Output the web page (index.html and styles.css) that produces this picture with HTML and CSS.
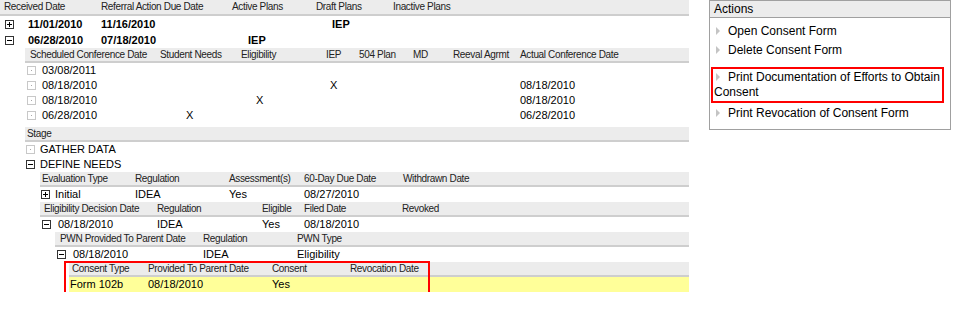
FILE: index.html
```html
<!DOCTYPE html>
<html lang="en">
<head>
  <meta charset="UTF-8">
  <title>Referral Plans</title>
  <link rel="stylesheet" href="styles.css">
</head>
<body>
<div class="page">
  <!-- Referral records -->
  <div class="records">
    <div class="row top head">
      <div>Received Date</div>
      <div>Referral Action Due Date</div>
      <div>Active Plans</div>
      <div>Draft Plans</div>
      <div>Inactive Plans</div>
    </div>
    <div class="row top data">
      <div><span class="tog plus"></span>11/01/2010</div>
      <div>11/16/2010</div>
      <div></div>
      <div class="plan">IEP</div>
      <div></div>
    </div>
    <div class="row top data">
      <div><span class="tog"></span>06/28/2010</div>
      <div>07/18/2010</div>
      <div class="plan">IEP</div>
      <div></div>
      <div></div>
    </div>

    <!-- Conferences -->
    <div class="conf">
      <div class="row head">
        <div>Scheduled Conference Date</div>
        <div>Student Needs</div>
        <div>Eligibility</div>
        <div>IEP</div>
        <div>504 Plan</div>
        <div>MD</div>
        <div>Reeval Agrmt</div>
        <div>Actual Conference Date</div>
      </div>
      <div class="row data">
        <div><span class="leaf"></span>03/08/2011</div>
        <div></div><div></div><div></div><div></div><div></div><div></div><div></div>
      </div>
      <div class="row data">
        <div><span class="leaf"></span>08/18/2010</div>
        <div></div><div></div><div>X</div><div></div><div></div><div></div><div>08/18/2010</div>
      </div>
      <div class="row data">
        <div><span class="leaf"></span>08/18/2010</div>
        <div></div><div>X</div><div></div><div></div><div></div><div></div><div>08/18/2010</div>
      </div>
      <div class="row data">
        <div><span class="leaf"></span>06/28/2010</div>
        <div>X</div><div></div><div></div><div></div><div></div><div></div><div>06/28/2010</div>
      </div>
    </div>

    <!-- Stages -->
    <div class="stage">
      <div class="row head"><div>Stage</div></div>
      <div class="row data"><div><span class="leaf"></span>GATHER DATA</div></div>
      <div class="row data"><div><span class="tog"></span>DEFINE NEEDS</div></div>
    </div>

    <div class="eval">
      <div class="row head">
        <div>Evaluation Type</div>
        <div>Regulation</div>
        <div>Assessment(s)</div>
        <div>60-Day Due Date</div>
        <div>Withdrawn Date</div>
      </div>
      <div class="row data">
        <div><span class="tog plus"></span>Initial</div>
        <div>IDEA</div>
        <div>Yes</div>
        <div>08/27/2010</div>
        <div></div>
      </div>
    </div>

    <div class="elig">
      <div class="row head">
        <div>Eligibility Decision Date</div>
        <div>Regulation</div>
        <div>Eligible</div>
        <div>Filed Date</div>
        <div>Revoked</div>
      </div>
      <div class="row data">
        <div><span class="tog"></span>08/18/2010</div>
        <div>IDEA</div>
        <div>Yes</div>
        <div>08/18/2010</div>
        <div></div>
      </div>
    </div>

    <div class="pwn">
      <div class="row head">
        <div>PWN Provided To Parent Date</div>
        <div>Regulation</div>
        <div>PWN Type</div>
      </div>
      <div class="row data">
        <div><span class="tog"></span>08/18/2010</div>
        <div>IDEA</div>
        <div>Eligibility</div>
      </div>
    </div>

    <div class="consent">
      <div class="row head">
        <div>Consent Type</div>
        <div>Provided To Parent Date</div>
        <div>Consent</div>
        <div>Revocation Date</div>
      </div>
      <div class="row data">
        <div>Form 102b</div>
        <div>08/18/2010</div>
        <div>Yes</div>
        <div></div>
      </div>
    </div>

    <!-- highlight drawn over the consent rows -->
    <div class="callout"></div>
  </div>

  <!-- Actions panel -->
  <div class="actions">
    <h3>Actions</h3>
    <ul>
      <li>Open Consent Form</li>
      <li>Delete Consent Form</li>
      <li class="hl">Print Documentation of Efforts to Obtain Consent</li>
      <li>Print Revocation of Consent Form</li>
    </ul>
  </div>
</div>
</body>
</html>
```

FILE: styles.css
```css
body {
  margin: 0;
  font-family: "Liberation Sans", Arial, sans-serif;
  font-size: 11px;
  color: #000;
  background: #fff;
}

.page {
  display: flex;
  align-items: flex-start;
  gap: 20px;
}

.records {
  position: relative;
  width: 689px;
}

.row {
  display: grid;
  height: 15px;
  line-height: 15px;
  white-space: nowrap;
}

.row > div {
  padding-left: 2px;
}

.head {
  height: 13px;
  line-height: 13px;
  background: #ececec;
  border-bottom: 2px solid #cecece;
  font-size: 10px;
  letter-spacing: -0.35px;
  color: #222;
}

/* expand / collapse boxes */
.tog,
.leaf {
  display: inline-block;
  position: relative;
  width: 7px;
  height: 7px;
  border: 1px solid #333;
  background: #fff;
  vertical-align: -1px;
  margin-right: 5px;
}

.tog::before {
  content: "";
  position: absolute;
  left: 1px;
  top: 3px;
  width: 5px;
  height: 1px;
  background: #000;
}

.tog.plus::after {
  content: "";
  position: absolute;
  left: 3px;
  top: 1px;
  width: 1px;
  height: 5px;
  background: #000;
}

.leaf {
  border-color: #c8c8c8;
}

.leaf::before {
  content: "";
  position: absolute;
  left: 3px;
  top: 3px;
  width: 1px;
  height: 1px;
  background: #a8a8a8;
}

/* referral rows */
.top {
  grid-template-columns: 97px 131px 84px 77px 1fr;
}

.top > div {
  padding-left: 4px;
}

.top.head {
  height: 14px;
  line-height: 14px;
}

.top.data {
  height: 16px;
  line-height: 16px;
  font-weight: bold;
}

.top.data > :first-child {
  padding-left: 5px;
}

.top .tog {
  margin-right: 14px;
}

.top .plan {
  padding-left: 20px;
}

/* conferences */
.conf {
  margin-left: 25px;
}

.conf .row {
  grid-template-columns: 130px 81px 85px 33px 54px 40px 67px 1fr;
}

.conf .row > div {
  padding-left: 5px;
}

.conf .data > :first-child {
  padding-left: 2px;
}

.conf .leaf {
  margin-right: 6px;
}

.conf .data > :nth-child(2) {
  padding-left: 31px;
}

.conf .data > :nth-child(3) {
  padding-left: 20px;
}

.conf .data > :nth-child(4) {
  padding-left: 9px;
}

/* stages */
.stage {
  margin: 4px 0 0 25px;
}

.stage .data > div {
  padding-left: 1px;
}

.eval,
.elig {
  margin-left: 40px;
}

.eval .row {
  grid-template-columns: 93px 94px 75px 99px 1fr;
}

.eval .data > :first-child {
  padding-left: 1px;
}

.elig .row {
  grid-template-columns: 115px 105px 42px 98px 1fr;
}

.elig .head > :first-child {
  padding-left: 4px;
}

.elig .tog,
.pwn .tog {
  margin-right: 7px;
}

.pwn {
  margin-left: 55px;
}

.pwn .row {
  grid-template-columns: 146px 94px 1fr;
}

.pwn .head > :first-child {
  padding-left: 5px;
}

.consent {
  margin-left: 69px;
}

.consent .row {
  grid-template-columns: 77px 124px 78px 1fr;
}

.consent .head > :first-child {
  padding-left: 3px;
}

.consent .data {
  background: #ffff99;
}

.consent .data > :first-child {
  padding-left: 1px;
}

.callout {
  position: absolute;
  left: 64px;
  top: 261px;
  width: 366px;
  height: 36px;
  box-sizing: border-box;
  border: 2px solid #f00;
}

/* actions */
.actions {
  width: 240px;
  height: 128px;
  border: 1px solid #a0a0a0;
  font-size: 12px;
}

.actions h3 {
  margin: 0;
  height: 16px;
  line-height: 16px;
  padding-left: 4px;
  font-size: 12px;
  font-weight: normal;
  background: #ececec;
  border-bottom: 1px solid #a0a0a0;
}

.actions ul {
  list-style: none;
  margin: 0;
  padding: 6px 0 0;
}

.actions li {
  line-height: 15px;
  padding-left: 4px;
  margin-bottom: 4px;
  cursor: pointer;
}

.actions li::before {
  content: "";
  display: inline-block;
  border-left: 4px solid #c4c4c4;
  border-top: 4px solid transparent;
  border-bottom: 4px solid transparent;
  margin: 0 8px 0 2px;
}

.actions li.hl {
  margin: 9px 6px 3px 1px;
  padding: 1px 0 1px 1px;
  border: 2px solid #f00;
}
```
